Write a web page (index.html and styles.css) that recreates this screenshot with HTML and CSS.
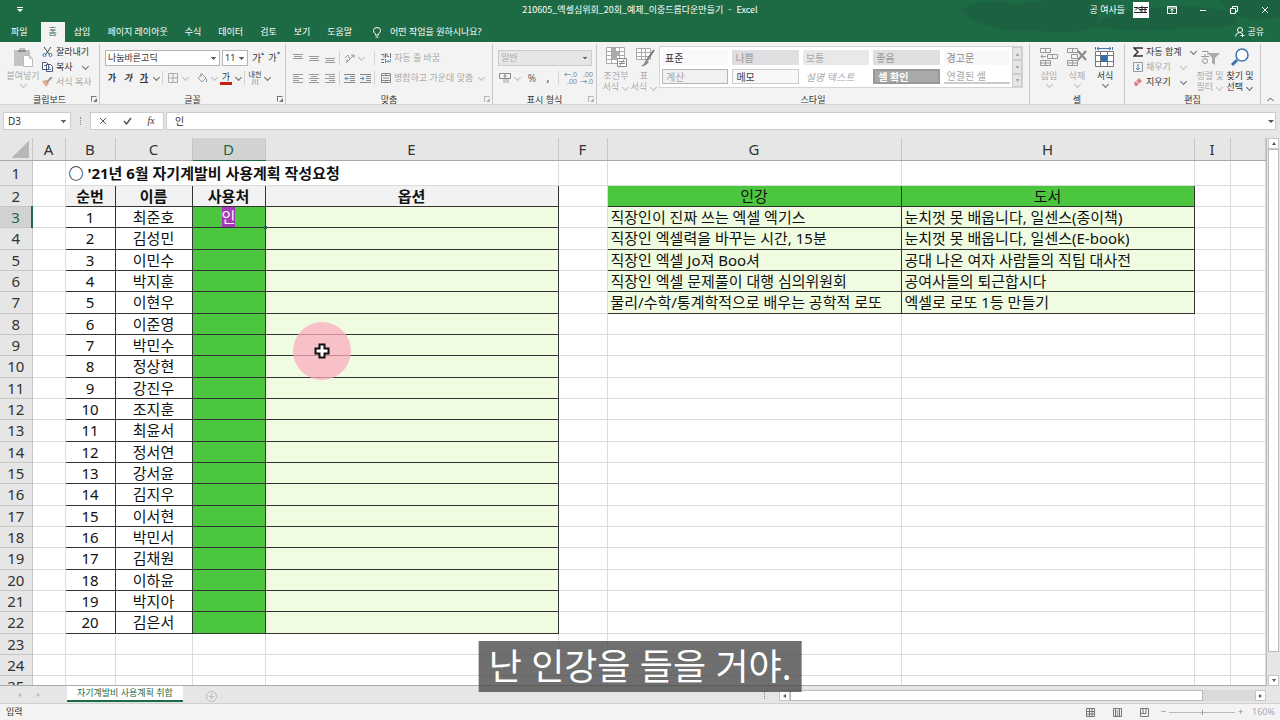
FILE: index.html
```html
<!DOCTYPE html>
<html lang="ko">
<head>
  <meta charset="UTF-8">
  <meta name="viewport" content="width=device-width, initial-scale=1.0">
  <title>210605_엑셀심위회_20회_예제_이중드롭다운만들기 - Excel</title>
  <link rel="stylesheet" href="styles.css">
</head>
<body>
  <header class="top">
    <svg class="top-art" viewBox="0 0 330 42" width="330" height="42">
      <path d="M10 10q25-14 55-6l30-4h55l-4 28q-30 8-62 2-50 4-74-20z"/>
      <path d="M140 26q40-24 120-18 26 2 28 14-10 8-50 6-50 6-98-2z"/>
      <path d="M268 0h62v16q-40 12-62-16z"/>
    </svg>
    <div class="titlebar">
      <div class="quick"><svg width="6" height="6" viewBox="0 0 6 6"><path d="M0 0h6v1H0zM0 2h6L3 5z"/></svg></div>
      <div class="doc-title">210605_엑셀심위회_20회_예제_이중드롭다운만들기&nbsp; -&nbsp; Excel</div>
      <div class="window-tools">
        <span>공 여사들</span>
        <svg class="avatar" width="16" height="16" viewBox="0 0 16 16"><path fill="#fff" d="M0 0h16v16H0z"/><path stroke="#222" fill="none" d="M1 5.500h4M2 8.500l3-3 3 4M6 5.500h9M7 7.500h7M1 10.500h13M9 4v7M12 5v5"/></svg>
        <button aria-label="리본 표시 옵션"><svg width="10" height="8" viewBox="0 0 10 8"><path d="M.5.5h9v7h-9zM.5 2h9M5 6.500V3.500M3.500 4.500L5 3l1.500 1.500"/></svg></button>
        <button aria-label="최소화"><svg width="8" height="8" viewBox="0 0 8 8"><path d="M1 4.500h6"/></svg></button>
        <button aria-label="이전 크기로 복원"><svg width="8" height="8" viewBox="0 0 8 8"><path d="M.5 2.500h5v5h-5zM2.500 2.500v-2h5v5h-2"/></svg></button>
        <button aria-label="닫기"><svg width="8" height="8" viewBox="0 0 8 8"><path d="M1 1l6 6M7 1L1 7"/></svg></button>
      </div>
    </div>
    <nav class="tabs">
      <button class="file">파일</button>
      <button class="active">홈</button>
      <button>삽입</button>
      <button>페이지 레이아웃</button>
      <button>수식</button>
      <button>데이터</button>
      <button>검토</button>
      <button>보기</button>
      <button>도움말</button>
      <button class="tell-me"><svg width="8" height="11" viewBox="0 0 8 11"><path d="M2.500 8V7Q.5 5.500.5 3.500a3.500 3 0 0 1 7 0Q7.500 5.500 5.500 7v1zM2.500 10h3"/></svg>어떤 작업을 원하시나요?</button>
      <button class="share"><svg width="10" height="10" viewBox="0 0 10 10"><circle cx="5" cy="3" r="2.500"/><path d="M.5 9.500Q1 6 4 5.500M6 6q1 .5 1.500 1M5.500 8.500h4M7.500 6.500v3.500"/></svg>공유</button>
    </nav>
  </header>

  <section class="ribbon">
    <div class="group clipboard">
      <div class="group-body">
        <button class="big off">
          <svg width="21" height="21" viewBox="0 0 21 21"><path fill="#c4c2c4" d="M1 3h5V1h6v2h5v5h-6v11H1z"/><path fill="#8f8d8f" d="M5 3h8v2H5z"/><path fill="#fff" stroke="#bbb" d="M10.500 8.500h6l3 3v8h-9zM16.500 8.500v3h3"/></svg>
          <span>붙여넣기</span><i class="caret"></i>
        </button>
        <div class="stack">
          <button><svg width="11" height="10" viewBox="0 0 11 10"><path stroke="#444" d="M2 0l5 7M9 0L4 7"/><circle stroke="#3a76b0" cx="2.500" cy="8" r="1.500"/><circle stroke="#3a76b0" cx="8.500" cy="8" r="1.500"/></svg>잘라내기</button>
          <button><svg width="11" height="10" viewBox="0 0 11 10"><path fill="#fff" stroke="#557" d="M.5.5h4l2 2v5h-6zM4.500 2.500h4l2 2v5h-6z"/><path stroke="#3a86b0" d="M6 5.500h2M6 7.500h3M2 3.500h2"/></svg>복사<i class="caret"></i></button>
          <button class="off"><svg width="11" height="10" viewBox="0 0 11 10"><path fill="#e2ab8e" d="M0 4l4-1 3 3-3 4z"/><path stroke="#999" stroke-width="2" d="M5 5l5-5"/></svg>서식 복사</button>
        </div>
      </div>
      <div class="group-name">클립보드</div><i class="launch"></i>
    </div>

    <div class="group font">
      <div class="group-body rows">
        <div class="row">
          <select class="font-name" aria-label="글꼴"><option>나눔바른고딕</option></select>
          <select class="font-size" aria-label="글꼴 크기"><option>11</option></select>
          <button class="tool grow">가<sup>▴</sup></button>
          <button class="tool grow small">가<sup>▾</sup></button>
        </div>
        <div class="row">
          <button class="tool bold">가</button><button class="tool bold italic">가</button><button class="tool bold under">가</button><i class="caret"></i>
          <i class="sep"></i>
          <button class="tool off"><svg width="10" height="10" viewBox="0 0 10 10"><path stroke="#aaa" d="M.5.5h9v9h-9zM5 0v10M0 5h10"/></svg></button><i class="caret off"></i>
          <button class="tool off fill"><svg width="11" height="11" viewBox="0 0 11 11"><path stroke="#999" d="M1 5l4-4 4 4-4 4zM4 0v4"/><path fill="#7ba7c9" d="M9 5q2 2 1 4H9z"/></svg></button><i class="caret off"></i>
          <button class="tool color">가</button><i class="caret"></i>
          <i class="sep"></i>
          <button class="tool hanja">내천<span>川</span></button><i class="caret"></i>
        </div>
      </div>
      <div class="group-name">글꼴</div><i class="launch"></i>
    </div>

    <div class="group align">
      <div class="group-body rows">
        <div class="row off">
          <button class="tool"><svg width="10" height="9" viewBox="0 0 10 9"><path d="M0 .5h10M1 2.500h8M0 4.500h10"/></svg></button>
          <button class="tool"><svg width="10" height="9" viewBox="0 0 10 9"><path d="M0 2.500h10M1 4.500h8M0 6.500h10"/></svg></button>
          <button class="tool"><svg width="10" height="9" viewBox="0 0 10 9"><path d="M0 4.500h10M1 6.500h8M0 8.500h10"/></svg></button>
          <i class="sep"></i>
          <button class="tool"><svg width="11" height="11" viewBox="0 0 11 11"><path d="M2 10l8-8M7 2h3v3M1 5l3-3M2 7l3 1M4 2l2 4"/></svg></button><i class="caret"></i>
          <i class="sep far"></i>
          <button class="text-tool"><svg width="10" height="10" viewBox="0 0 10 10"><path stroke="#777" d="M0 1.500h3v3M4.500 0v5M6 .5v3h2M9.500 0v5M0 6.500h3M0 9.500h3M4.500 6v4"/><path stroke="#6f9cc0" d="M6 8.500h3.500V6M7.500 7L6 8.500 7.500 10"/></svg>자동 줄 바꿈</button>
        </div>
        <div class="row off">
          <button class="tool"><svg width="10" height="9" viewBox="0 0 10 9"><path d="M0 .5h10M0 2.500h6M0 4.500h10M0 6.500h6M0 8.500h10"/></svg></button>
          <button class="tool"><svg width="10" height="9" viewBox="0 0 10 9"><path d="M0 .5h10M2 2.500h6M0 4.500h10M2 6.500h6M0 8.500h10"/></svg></button>
          <button class="tool"><svg width="10" height="9" viewBox="0 0 10 9"><path d="M0 .5h10M4 2.500h6M0 4.500h10M4 6.500h6M0 8.500h10"/></svg></button>
          <i class="sep"></i>
          <button class="tool"><svg width="11" height="9" viewBox="0 0 11 9"><path stroke="#888" d="M0 .5h11M6 2.500h5M6 4.500h5M6 6.500h5M0 8.500h11"/><path stroke="#5790bd" d="M5 4.500H1M3 2.500l-2 2 2 2"/></svg></button>
          <button class="tool"><svg width="11" height="9" viewBox="0 0 11 9"><path stroke="#888" d="M0 .5h11M6 2.500h5M6 4.500h5M6 6.500h5M0 8.500h11"/><path stroke="#5790bd" d="M0 4.500h4M2 2.500l2 2-2 2"/></svg></button>
          <i class="sep"></i>
          <button class="text-tool"><svg width="10" height="10" viewBox="0 0 10 10"><path stroke="#888" d="M.5.5h9v9h-9zM0 2.500h10M0 7.500h10M5 0v2M5 8v2M2 5h6"/></svg>병합하고 가운데 맞춤</button><i class="caret end"></i>
        </div>
      </div>
      <div class="group-name">맞춤</div><i class="launch off"></i>
    </div>

    <div class="group number">
      <div class="group-body rows">
        <div class="row"><select class="format" aria-label="표시 형식" disabled><option>일반</option></select></div>
        <div class="row off">
          <button class="tool"><svg width="12" height="10" viewBox="0 0 12 10"><path stroke="#888" d="M.5.5h11v5H.5zM4.500 3h3M6 1v4"/><path fill="#ccc" d="M4 6h6v4H4z"/></svg></button><i class="caret"></i>
          <button class="tool dark percent-style">%</button>
          <button class="tool dark comma">,</button>
          <i class="sep"></i>
          <button class="tool decimals"><b>←</b>.0<br>.00</button>
          <button class="tool decimals">.00<br><b>→</b>.0</button>
        </div>
      </div>
      <div class="group-name">표시 형식</div><i class="launch off"></i>
    </div>

    <div class="group styles">
      <div class="group-body">
        <button class="big off"><svg width="21" height="21" viewBox="0 0 21 21"><path stroke="#aaa" fill="#fff" d="M.5.5h18v16H.5zM0 4.500h18M0 8.500h18M0 12.500h18M5.500 0v16M13.500 0v16"/><path fill="#aaa" d="M6 1h4v4H6zM6 5h7v4H6zM6 9h5v4H6z"/><path stroke="#888" fill="#fff" d="M11.500 11.500h9v8h-9zM13 14.500h6M13 16.500h6M18 12.500l-4 6"/></svg><span>조건부<br>서식 <i class="caret"></i></span></button>
        <button class="big off"><svg width="21" height="21" viewBox="0 0 21 21"><path stroke="#aaa" fill="#fff" d="M2.500 1.500h14v11h-14zM2 5.500h14M2 9.500h14M7.500 1v11M11.500 1v11"/><path stroke="#777" stroke-width="2" d="M20 3l-7 10"/><path fill="#888" d="M12 12l3 3q-4 5-8 4 4-2 5-7z"/></svg><span>표<br>서식 <i class="caret"></i></span></button>
        <div class="gallery">
          <div class="style-list">
            <button class="plain">표준</button><button class="bad">나쁨</button><button class="neutral">보통</button><button class="good">좋음</button><button class="warn">경고문</button>
            <button class="calc">계산</button><button class="memo">메모</button><button class="note">설명 텍스트</button><button class="check">셀 확인</button><button class="linked">연결된 셀</button>
          </div>
          <div class="gallery-scroll"><button aria-label="위로">▴</button><button aria-label="아래로">▾</button><button aria-label="자세히">▾</button></div>
        </div>
      </div>
      <div class="group-name">스타일</div>
    </div>

    <div class="group cells">
      <div class="group-body">
        <button class="big off"><svg width="20" height="21" viewBox="0 0 20 21"><path stroke="#999" d="M1.500 1.500h10v4h-10zM6.500 1v4M8.500 7.500h10v4h-10zM13.500 7v4M1.500 13.500h10v5h-10zM6.500 13v5M1.500 16h10M7 9.500H2M4 7.500l-2 2 2 2"/></svg><span>삽입</span><i class="caret"></i></button>
        <button class="big off"><svg width="20" height="21" viewBox="0 0 20 21"><path stroke="#999" d="M.5 1.500h10v4h-10zM5.500 1v4M4.500 7.500h6v4h-6zM.5 13.500h10v5h-10zM5.500 13v5M.5 16h10"/><path stroke="#888" stroke-width="2" d="M11 4l8 9M19 4l-8 9"/></svg><span>삭제</span><i class="caret"></i></button>
        <button class="big"><svg width="20" height="21" viewBox="0 0 20 21"><path stroke="#3a76b0" d="M2 1.500h14M4 0L2 1.500 4 3M14 0l2 1.500L14 3M.5 0v3M17.500 0v3"/><path fill="#fff" stroke="#777" d="M.5 4.500h18v15H.5zM0 8.500h18M0 14.500h18M5.500 4v15M12.500 4v15"/><path fill="#3570ad" d="M6 8h6v7H6z"/></svg><span>서식</span><i class="caret"></i></button>
      </div>
      <div class="group-name">셀</div>
    </div>

    <div class="group edit">
      <div class="group-body">
        <div class="stack">
          <button><svg width="10" height="10" viewBox="0 0 10 10"><path stroke="#333" stroke-width="1.500" d="M9 2V1H1l4 4-4 4h8V8"/></svg>자동 합계<i class="caret"></i></button>
          <button class="off"><svg width="10" height="10" viewBox="0 0 10 10"><path stroke="#999" d="M.5.5h9v9h-9z"/><path stroke="#4b87b8" d="M5 2v6M3 6l2 2 2-2"/></svg>채우기<i class="caret"></i></button>
          <button><svg width="10" height="10" viewBox="0 0 10 10"><path fill="#e07f8b" d="M1 6l5-5 3 3-5 5H2z"/><path stroke="#f3f3f3" d="M3 4l3 3"/></svg>지우기<i class="caret"></i></button>
        </div>
        <button class="big off"><svg width="20" height="21" viewBox="0 0 20 21"><path stroke="#999" d="M2 4.500h6V8M1 9.500h8M5 7v2"/><circle stroke="#999" cx="5" cy="14" r="2.500"/><path fill="#aaa" d="M8 6h12l-5 5v7l-3-2v-5z"/></svg><span>정렬 및<br>필터 <i class="caret"></i></span></button>
        <button class="big"><svg width="20" height="21" viewBox="0 0 20 21"><circle cx="12" cy="8" r="6" fill="#fff" stroke="#3a76b0" stroke-width="1.500"/><path stroke="#3a76b0" stroke-width="3" d="M7 13l-5 5"/></svg><span>찾기 및<br>선택 <i class="caret"></i></span></button>
      </div>
      <div class="group-name">편집</div>
    </div>
    <button class="collapse" aria-label="리본 축소"><svg width="7" height="5" viewBox="0 0 7 5"><path d="M.5 4l3-3 3 3"/></svg></button>
  </section>

  <section class="formula">
    <select class="name-box" aria-label="이름 상자"><option>D3</option></select>
    <span class="dots"></span>
    <div class="formula-buttons">
      <button aria-label="취소"><svg width="8" height="8" viewBox="0 0 8 8"><path d="M1 1l6 6M7 1L1 7"/></svg></button>
      <button aria-label="입력"><svg width="9" height="8" viewBox="0 0 9 8"><path stroke-width="1.500" d="M1 4l2.500 3L8 1"/></svg></button>
      <button class="fx" aria-label="함수 삽입">fx</button>
    </div>
    <input type="text" value="인" aria-label="수식 입력줄">
    <i class="drop"></i>
  </section>

  <main class="sheet">
    <div class="grid">
      <table>
        <colgroup>
          <col class="c-head"><col class="c-a"><col class="c-b"><col class="c-c"><col class="c-d"><col class="c-e"><col class="c-f"><col class="c-g"><col class="c-h"><col class="c-i"><col>
        </colgroup>
        <thead>
          <tr><th class="corner"></th><th>A</th><th>B</th><th>C</th><th class="sel">D</th><th>E</th><th>F</th><th>G</th><th>H</th><th>I</th><th></th></tr>
        </thead>
        <tbody class="heading">
          <tr><th>1</th><td></td><td class="title" colspan="4">○ '21년 6월 자기계발비 사용계획 작성요청</td><td></td><td></td><td></td><td></td><td></td></tr>
        </tbody>
        <tbody class="plan">
          <tr class="labels"><th>2</th><td></td><td>순번</td><td>이름</td><td>사용처</td><td>옵션</td><td></td><td class="opt-head">인강</td><td class="opt-head">도서</td><td></td><td></td></tr>
          <tr><th class="sel">3</th><td></td><td>1</td><td>최준호</td><td class="editing"><span>인</span></td><td></td><td></td><td class="opt">직장인이 진짜 쓰는 엑셀 엑기스</td><td class="opt">눈치껏 못 배웁니다, 일센스(종이책)</td><td></td><td></td></tr>
          <tr><th>4</th><td></td><td>2</td><td>김성민</td><td></td><td></td><td></td><td class="opt">직장인 엑셀력을 바꾸는 시간, 15분</td><td class="opt">눈치껏 못 배웁니다, 일센스(E-book)</td><td></td><td></td></tr>
          <tr><th>5</th><td></td><td>3</td><td>이민수</td><td></td><td></td><td></td><td class="opt">직장인 엑셀 Jo져 Boo셔</td><td class="opt">공대 나온 여자 사람들의 직팁 대사전</td><td></td><td></td></tr>
          <tr><th>6</th><td></td><td>4</td><td>박지훈</td><td></td><td></td><td></td><td class="opt">직장인 엑셀 문제풀이 대행 심의위원회</td><td class="opt">공여사들의 퇴근합시다</td><td></td><td></td></tr>
          <tr><th>7</th><td></td><td>5</td><td>이현우</td><td></td><td></td><td></td><td class="opt">물리/수학/통계학적으로 배우는 공학적 로또</td><td class="opt">엑셀로 로또 1등 만들기</td><td></td><td></td></tr>
          <tr><th>8</th><td></td><td>6</td><td>이준영</td><td></td><td></td><td></td><td></td><td></td><td></td><td></td></tr>
          <tr><th>9</th><td></td><td>7</td><td>박민수</td><td></td><td></td><td></td><td></td><td></td><td></td><td></td></tr>
          <tr><th>10</th><td></td><td>8</td><td>정상현</td><td></td><td></td><td></td><td></td><td></td><td></td><td></td></tr>
          <tr><th>11</th><td></td><td>9</td><td>강진우</td><td></td><td></td><td></td><td></td><td></td><td></td><td></td></tr>
          <tr><th>12</th><td></td><td>10</td><td>조지훈</td><td></td><td></td><td></td><td></td><td></td><td></td><td></td></tr>
          <tr><th>13</th><td></td><td>11</td><td>최윤서</td><td></td><td></td><td></td><td></td><td></td><td></td><td></td></tr>
          <tr><th>14</th><td></td><td>12</td><td>정서연</td><td></td><td></td><td></td><td></td><td></td><td></td><td></td></tr>
          <tr><th>15</th><td></td><td>13</td><td>강서윤</td><td></td><td></td><td></td><td></td><td></td><td></td><td></td></tr>
          <tr><th>16</th><td></td><td>14</td><td>김지우</td><td></td><td></td><td></td><td></td><td></td><td></td><td></td></tr>
          <tr><th>17</th><td></td><td>15</td><td>이서현</td><td></td><td></td><td></td><td></td><td></td><td></td><td></td></tr>
          <tr><th>18</th><td></td><td>16</td><td>박민서</td><td></td><td></td><td></td><td></td><td></td><td></td><td></td></tr>
          <tr><th>19</th><td></td><td>17</td><td>김채원</td><td></td><td></td><td></td><td></td><td></td><td></td><td></td></tr>
          <tr><th>20</th><td></td><td>18</td><td>이하윤</td><td></td><td></td><td></td><td></td><td></td><td></td><td></td></tr>
          <tr><th>21</th><td></td><td>19</td><td>박지아</td><td></td><td></td><td></td><td></td><td></td><td></td><td></td></tr>
          <tr><th>22</th><td></td><td>20</td><td>김은서</td><td></td><td></td><td></td><td></td><td></td><td></td><td></td></tr>
        </tbody>
        <tbody>
          <tr><th>23</th><td></td><td></td><td></td><td></td><td></td><td></td><td></td><td></td><td></td><td></td></tr>
          <tr><th>24</th><td></td><td></td><td></td><td></td><td></td><td></td><td></td><td></td><td></td><td></td></tr>
          <tr><th>25</th><td></td><td></td><td></td><td></td><td></td><td></td><td></td><td></td><td></td><td></td></tr>
        </tbody>
      </table>
      <div class="pointer"><svg width="16" height="16" viewBox="0 0 16 16"><path d="M5.500 1.500h5v4h4v5h-4v4h-5v-4h-4v-5h4z" fill="#fff" stroke="#111" stroke-width="2"/></svg></div>
    </div>
    <div class="vscroll"><i class="arrow up"></i><i class="thumb"></i><i class="arrow down"></i></div>
  </main>

  <section class="sheet-bar">
    <div class="sheet-nav"><i class="arrow left"></i><i class="arrow right"></i></div>
    <button class="sheet-tab">자기계발비 사용계획 취합</button>
    <button class="add" aria-label="새 시트"><svg width="11" height="11" viewBox="0 0 11 11"><circle cx="5.500" cy="5.500" r="5"/><path d="M5.500 3v5M3 5.500h5"/></svg></button>
    <span class="dots"></span>
    <div class="hscroll"><i class="arrow left"></i><i class="thumb"></i><i class="arrow right"></i></div>
  </section>

  <footer class="status">
    <span>입력</span>
    <div class="views">
      <button aria-label="기본"><svg width="9" height="9" viewBox="0 0 9 9"><path d="M.5.5h8v8h-8zM3.500 0v9M6 0v9M0 3.500h9M0 6h9"/></svg></button>
      <button aria-label="페이지 레이아웃"><svg width="9" height="9" viewBox="0 0 9 9"><path d="M.5.5h8v8h-8zM2.500 1v7M6.500 1v7M3.500 3h2M3.500 5h2M3.500 7h2"/></svg></button>
      <button aria-label="페이지 나누기"><svg width="9" height="9" viewBox="0 0 9 9"><path d="M.5.5h8v8h-8zM3 0v5.500h3V0M0 5.500h3"/></svg></button>
    </div>
    <div class="zoom"><span>−</span><i class="track"></i><span>+</span></div>
    <span class="percent">160%</span>
  </footer>

  <p class="caption">난 인강을 들을 거야.</p>
</body>
</html>
```
FILE: styles.css
```css
* {
  box-sizing: border-box;
}
body {
  margin: 0;
  height: 100vh;
  display: flex;
  flex-direction: column;
  overflow: hidden;
  position: relative;
  background: #fff;
  color: #333;
  font-family: "Noto Sans", "Noto Sans CJK KR", sans-serif;
  font-size: 9px;
  line-height: 12px;
}
button,
select,
input {
  font: inherit;
  color: inherit;
  margin: 0;
  padding: 0;
  border: 0;
  background: none;
  white-space: nowrap;
}
svg {
  fill: none;
  stroke-width: 1;
  flex: none;
}
i {
  font-style: normal;
}

/* title bar and tabs */
.top {
  background: #1d6b45;
  color: #fff;
  position: relative;
  flex: none;
}
.top-art {
  position: absolute;
  right: 0;
  top: 0;
  fill: #1c6240;
}
.titlebar {
  position: relative;
  height: 20px;
  display: grid;
  grid-template-columns: 1fr auto 1fr;
  align-items: center;
}
.doc-title {
  font-family: "Noto Sans CJK KR", sans-serif;
}
.quick {
  padding-left: 17px;
  display: flex;
}
.quick svg {
  fill: #fff;
}
.window-tools {
  display: flex;
  justify-content: flex-end;
  align-items: center;
}
.window-tools .avatar {
  margin: 0 7px 0 8px;
}
.window-tools button {
  width: 31px;
  height: 20px;
  display: flex;
  align-items: center;
  justify-content: center;
  stroke: #fff;
}
.tabs {
  position: relative;
  display: flex;
  gap: 1px;
  height: 22px;
  padding: 2px 16px 0 3px;
}
.tabs button {
  padding: 0 8px;
}
.tabs .file {
  margin-right: 4px;
}
.tabs .active {
  background: #f3f3f3;
  color: #1d6b45;
}
.tabs .tell-me,
.tabs .share {
  display: flex;
  align-items: center;
  gap: 9px;
  padding-left: 12px;
}
.tabs svg {
  stroke: #fff;
}
.tabs .share {
  gap: 2px;
  margin-left: auto;
  padding: 0;
}

/* ribbon */
.ribbon {
  flex: none;
  display: flex;
  height: 63px;
  padding-top: 2px;
  background: #f3f3f3;
  border-bottom: 1px solid #d5d5d5;
}
.group {
  position: relative;
  flex: none;
  display: flex;
  flex-direction: column;
  border-right: 1px solid #c8c8c8;
}
.group-body {
  flex: none;
  display: flex;
  height: 48px;
}
.group-name {
  text-align: center;
  line-height: 12px;
}
.clipboard {
  width: 100px;
}
.font {
  width: 186px;
}
.align {
  width: 207px;
}
.number {
  width: 104px;
}
.styles {
  flex: 1 0 433px;
}
.cells {
  width: 95px;
}
.edit {
  width: 136px;
}
.off {
  color: #aaa;
}
.launch {
  position: absolute;
  right: 2px;
  bottom: 2px;
  width: 6px;
  height: 6px;
  border: 1px solid #777;
  border-right-color: transparent;
  border-bottom-color: transparent;
}
.launch::after {
  content: "";
  position: absolute;
  right: -1px;
  bottom: -1px;
  border-left: 4px solid transparent;
  border-bottom: 4px solid #777;
}
.launch.off {
  opacity: 0.5;
}
.caret {
  display: inline-block;
  width: 8px;
  height: 8px;
  position: relative;
  flex: none;
  opacity: 0.7;
}
.caret::before {
  content: "";
  position: absolute;
  left: 2px;
  top: 1px;
  width: 4px;
  height: 4px;
  border: solid currentColor;
  border-width: 0 1px 1px 0;
  transform: rotate(45deg);
}
.big {
  display: flex;
  flex-direction: column;
  align-items: center;
  padding-top: 3px;
  line-height: 11px;
  width: 28px;
}
.big > span {
  margin-top: 2px;
}
.big .caret {
  vertical-align: middle;
}
.stack {
  display: flex;
  flex-direction: column;
}
.stack button {
  display: flex;
  align-items: center;
  gap: 3px;
  height: 15px;
}
.stack .caret {
  margin-left: 5px;
}
.clipboard .big {
  width: 36px;
  margin: 0 1px 0 5px;
}
.rows {
  flex-direction: column;
}
.row {
  display: flex;
  align-items: center;
  height: 20px;
}
.rows .row:first-child {
  margin-top: 4px;
}
.tool {
  flex: none;
  display: flex;
  align-items: center;
  justify-content: center;
  width: 16px;
  height: 16px;
}
.sep {
  width: 1px;
  height: 14px;
  margin: 0 2px;
  background: #d4d4d4;
}
select {
  appearance: none;
  border: 1px solid #b5b5b5;
  border-radius: 0;
  background: #fff conic-gradient(from 315deg at 50% 100%, #666 90deg, transparent 0) no-repeat right 3px center / 6px 3px;
  opacity: 1;
}
.font .row {
  padding-left: 4px;
}
.font-name {
  width: 115px;
  height: 16px;
  padding-left: 2px;
  margin: 0 2px 0 1px;
}
.font-size {
  width: 26px;
  height: 16px;
  padding-left: 2px;
  margin-right: 2px;
}
.grow {
  font-size: 10px;
}
.grow.small {
  font-size: 9px;
}
.grow sup {
  font-size: 6px;
  line-height: 6px;
  color: #3a76b0;
  align-self: flex-start;
}
.bold {
  font-weight: 700;
}
.italic {
  font-style: italic;
}
.under {
  text-decoration: underline;
}
.fill {
  margin-left: 5px;
}
.color {
  height: 14px;
  width: 12px;
  margin: 0 2px;
  border-bottom: 3px solid #c8200c;
}
.hanja {
  flex-direction: column;
  font-size: 7px;
  line-height: 7px;
}
.hanja span {
  color: #3a76b0;
}
.align .row {
  padding-left: 4px;
  stroke: #999;
}
.align .sep {
  margin: 0 1px;
}
.align .sep.far {
  margin-left: 9px;
}
.text-tool {
  display: flex;
  align-items: center;
  gap: 3px;
  margin-left: 5px;
}
.caret.end {
  margin-left: 4px;
}
.format {
  width: 94px;
  height: 16px;
  margin-left: 5px;
  padding-left: 2px;
  color: #aaa;
  background-color: #e6e6e6;
  border-color: #ccc;
}
.number .row.off {
  padding-left: 4px;
}
.dark {
  color: #666;
  font-size: 10px;
}
.percent-style {
  margin-left: 3px;
}
.comma {
  font-weight: 700;
}
.decimals {
  display: block;
  font-size: 7px;
  line-height: 7px;
  color: #888;
  text-align: right;
}
.decimals b {
  color: #3a76b0;
  font-weight: 400;
}
.styles .group-body {
  padding-left: 5px;
}
.gallery {
  flex: 1;
  display: flex;
  height: 42px;
  margin: 2px 6px 0 1px;
  border: 1px solid #d4d4d4;
  background: #fff;
}
.style-list {
  flex: 1;
  display: grid;
  grid-template-columns: repeat(5, 1fr);
  gap: 4px;
  padding: 3px 2px;
}
.style-list button {
  height: 15px;
  padding-left: 3px;
  text-align: left;
  font-size: 10px;
  line-height: 12px;
  color: #aaa;
}
.style-list .plain {
  color: #333;
  background: #faf8fa;
}
.style-list .bad,
.style-list .good {
  background: #e0dee0;
  color: #999;
}
.style-list .neutral {
  background: #eae8ea;
}
.style-list .warn {
  background: #f9f7f9;
  color: #888;
}
.style-list .calc {
  border: 1px solid #b5b5b5;
  background: #f2f0f2;
}
.style-list .memo {
  border: 1px solid #ccc;
  background: #f8f8f8;
  color: #444;
}
.style-list .note {
  font-style: italic;
}
.style-list .check {
  border: 2px solid #999;
  background: #aaa;
  color: #fff;
  font-weight: 700;
  line-height: 10px;
}
.style-list .linked {
  border-bottom: 2px solid #ccc;
}
.gallery-scroll {
  width: 10px;
  display: flex;
  flex-direction: column;
}
.gallery-scroll button {
  flex: 1;
  font-size: 6px;
  line-height: 8px;
  color: #999;
  background: #e6e6e6;
  border: 1px solid #ccc;
}
.cells .group-body {
  padding-left: 5px;
}
.group-name {
  margin-top: 2px;
}
.edit .stack {
  width: 66px;
  padding-left: 8px;
}
.edit .big {
  width: 30px;
  margin-left: 4px;
}
.edit .big + .big {
  margin-left: 0;
}
.collapse {
  flex: none;
  align-self: flex-end;
  width: 19px;
  padding-bottom: 2px;
  line-height: 6px;
  stroke: #555;
}

/* formula bar */
.formula {
  position: relative;
  flex: none;
  display: flex;
  height: 33px;
  padding: 7px 4px 8px 3px;
  background: #e6e6e6;
  font-size: 10px;
}
.name-box {
  width: 68px;
  padding-left: 4px;
  border-color: #ccc;
}
.dots {
  width: 1px;
  height: 8px;
  margin: 5px 9px;
  border-left: 1px dotted #888;
}
.formula-buttons {
  display: flex;
  width: 74px;
  margin-right: 2px;
  border: 1px solid #ccc;
  background: #fff;
}
.formula-buttons button {
  flex: 1;
  stroke: #555;
}
.formula-buttons .fx {
  font-family: "Liberation Serif", serif;
  font-style: italic;
}
.formula input {
  flex: 1;
  padding-left: 8px;
  border: 1px solid #ccc;
  background: #fff;
}
.drop {
  position: absolute;
  right: 6px;
  top: 15px;
  border: solid transparent;
  border-width: 3px 3px 0;
  border-top-color: #555;
}

/* worksheet */
.sheet {
  flex: 1;
  min-height: 0;
  display: flex;
  background: #e6e6e6;
}
.grid {
  flex: 1;
  position: relative;
  overflow: hidden;
  background: #fff;
  border-right: 1px solid #bbb;
  border-bottom: 1px solid #aaa;
}
table {
  width: 100%;
  table-layout: fixed;
  border-collapse: collapse;
  font-size: 15px;
  line-height: 20px;
  color: #111;
}
.c-head {
  width: 32px;
}
.c-a {
  width: 33px;
}
.c-b {
  width: 50px;
}
.c-c {
  width: 77px;
}
.c-d {
  width: 73px;
}
.c-e {
  width: 293px;
}
.c-f {
  width: 49px;
}
.c-g {
  width: 294px;
}
.c-h {
  width: 293px;
}
.c-i {
  width: 36px;
}
th,
td {
  height: 21px;
  padding: 0;
  text-align: center;
  white-space: nowrap;
}
tr:nth-child(3n) td {
  height: 22px;
}
td {
  border: 1px solid #dcdcdc;
}
th {
  font-weight: 400;
  background: #e6e6e6;
  border: 1px solid #c6c6c6;
  border-left: 0;
  color: #333;
}
thead th {
  height: 22px;
  border-top: 0;
  border-bottom-color: #aaa;
}
thead .sel {
  background: #d2d2d2;
  color: #1d6b45;
  border-bottom: 1px solid #1d6b45;
}
tbody .sel {
  background: #d2d2d2;
  color: #1d6b45;
  border-right: 2px solid #1d6b45;
}
.corner {
  background: linear-gradient(135deg, transparent 50%, #b8b8b8 50%) no-repeat 12px 3px / 17px 17px #e6e6e6;
}
.heading td,
.heading th {
  height: 25px;
}
.title {
  padding-left: 3px;
  text-align: left;
  font-weight: 700;
}
.plan td:nth-child(n+3):nth-child(-n+6) {
  border: 1px solid #333;
}
.plan td:nth-child(5) {
  background: #4dc63f;
}
.plan td:nth-child(6) {
  background: #f0fce1;
}
.plan .labels td:nth-child(n+3):nth-child(-n+6) {
  background: #f2f2f2;
  font-weight: 700;
}
.plan .opt-head {
  background: #4dc63f;
  border: 1px solid #333;
}
.plan .opt {
  background: #f0fce1;
  border: 1px solid #333;
  padding-left: 3px;
  text-align: left;
}
.editing {
  position: relative;
}
.editing span {
  display: inline-block;
  background: #a63ab8;
  color: #fff;
}
.editing::after {
  content: "";
  position: absolute;
  right: -2px;
  bottom: -2px;
  width: 3px;
  height: 3px;
  background: #1d6b45;
}
.pointer {
  position: absolute;
  left: 293px;
  top: 184px;
  width: 58px;
  height: 58px;
  border-radius: 50%;
  background: rgba(250, 173, 190, 0.75);
  display: flex;
  align-items: center;
  justify-content: center;
}

/* scroll bars */
.vscroll {
  width: 13px;
  padding: 0 1px;
  display: flex;
  flex-direction: column;
}
.vscroll .thumb {
  flex: 1;
  margin-bottom: 23px;
}
.thumb {
  background: #fff;
  border: 1px solid #bbb;
}
.arrow {
  flex: none;
  width: 11px;
  height: 11px;
  display: flex;
  align-items: center;
  justify-content: center;
  background: #fff;
  border: 1px solid #c6c6c6;
}
.arrow::before {
  content: "";
  border: 2px solid transparent;
}
.up::before {
  border-top: 0;
  border-bottom: 3px solid #555;
}
.down::before {
  border-bottom: 0;
  border-top: 3px solid #555;
}
.left::before {
  border-left: 0;
  border-right: 3px solid #555;
}
.right::before {
  border-right: 0;
  border-left: 3px solid #555;
}

/* sheet tabs and status bar */
.sheet-bar {
  flex: none;
  display: flex;
  height: 18px;
  background: #e6e6e6;
  border-bottom: 1px solid #d0d0d0;
}
.sheet-nav {
  width: 67px;
  display: flex;
  gap: 8px;
  padding: 3px 0 0 14px;
}
.sheet-nav .arrow {
  background: none;
  border: 0;
  opacity: 0.35;
}
.sheet-tab {
  height: 16px;
  padding: 0 10px;
  background: #fff;
  color: #1d6b45;
  border-bottom: 2px solid #1d6b45;
}
.add {
  margin-left: 23px;
  padding-top: 3px;
  line-height: 0;
  stroke: #bbb;
}
.sheet-bar .dots {
  margin: 5px 14px 0 auto;
}
.hscroll {
  width: 487px;
  height: 11px;
  margin: 4px 14px 0 0;
  display: flex;
  background: #dadada;
}
.hscroll .thumb {
  flex: 1;
  margin-right: 52px;
}
.status {
  flex: none;
  display: flex;
  align-items: center;
  height: 16px;
  padding: 0 5px 0 6px;
  background: #f3f3f3;
}
.views {
  display: flex;
  gap: 18px;
  margin: 0 12px 0 auto;
  stroke: #777;
}
.views button {
  display: flex;
}
.zoom {
  display: flex;
  align-items: center;
  gap: 3px;
  color: #888;
}
.track {
  position: relative;
  width: 66px;
  height: 1px;
  background: #bbb;
}
.track::after {
  content: "";
  position: absolute;
  left: 50%;
  top: -2px;
  width: 1px;
  height: 5px;
  background: #999;
}
.percent {
  margin-left: 9px;
  color: #aaa;
}

/* subtitle */
.caption {
  position: absolute;
  left: 50%;
  bottom: 28px;
  transform: translateX(-50%);
  margin: 0;
  padding: 0 10px;
  background: rgba(70, 70, 70, 0.78);
  color: #fff;
  font-size: 36px;
  line-height: 51px;
  white-space: nowrap;
}
```
